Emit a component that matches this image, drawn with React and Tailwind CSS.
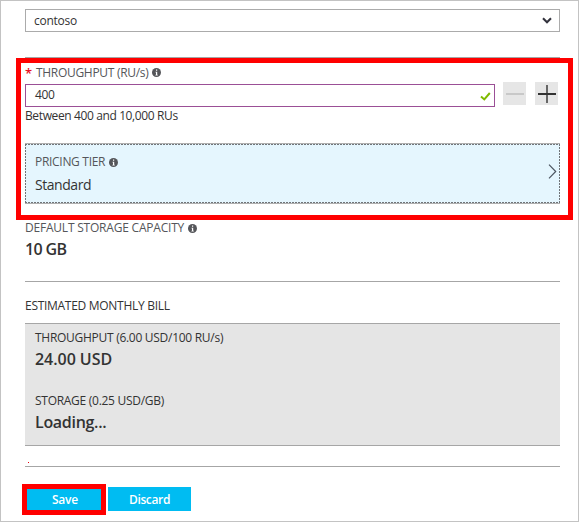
import React from "react";

function Info() {
  return (
    <svg className="ml-[4px] block h-[9px] w-[9px] shrink-0" viewBox="0 0 9 9">
      <circle cx="4.5" cy="4.5" r="4.5" fill="#55565a" />
      <path d="M4 1.5h1.2v1.2H4zM3.5 3.7h1.7v3h.6v.7H3.4v-.7H4V4.4h-.5z" fill="#fff" />
    </svg>
  );
}

function StepButton({ className, children }) {
  return (
    <button className={"flex h-[23px] w-[23px] items-center justify-center bg-[#e6e6e6] " + className}>
      <svg className="block h-[23px] w-[23px]" viewBox="0 0 23 23">{children}</svg>
    </button>
  );
}

export default function App() {
  return (
    <div className="relative h-[522px] w-[579px] overflow-hidden border border-[#c3c3c3] bg-white pt-2 pr-[18px] pl-6 font-['Open_Sans','Noto_Sans',sans-serif] text-[12px] leading-4 text-[#333]">
      <div className="flex h-[23px] items-center justify-between border border-[#ababab] pr-[7px] pl-2">
        <span className="tracking-[-0.25px]">contoso</span>
        <svg className="h-[7px] w-[10px]" viewBox="0 0 10 7">
          <path d="M1 1.3 5 5.2 9 1.3" fill="none" stroke="#33333d" strokeWidth="2.1" />
        </svg>
      </div>

      <div className="mt-[25px] border-t border-[#a6a6a6]">
        <div className="flex h-[25px] items-center pt-1 text-[#55565a]">
          <span className="w-[11px] text-[13px] leading-4 font-semibold text-[#e81123]">*</span>
          <span className="tracking-[-0.3px]">THROUGHPUT (RU/s)</span>
          <Info />
        </div>
        <div className="flex h-[25px]">
          <div className="mt-px flex h-[23px] w-[470px] items-center justify-between border border-[#9b4f96] pr-[3px] pl-[9px]">
            <span className="-mt-px tracking-[-0.4px]">400</span>
            <svg className="mt-px h-[9px] w-[11px]" viewBox="0 0 11 9">
              <path d="M1 4.5 4.3 7.4 9.8 1" fill="none" stroke="#7fba00" strokeWidth="2" />
            </svg>
          </div>
          <StepButton className="-mt-px ml-2">
            <path d="M3 12h18" stroke="#c8c8c8" strokeWidth="2" />
          </StepButton>
          <StepButton className="-mt-px ml-[9px]">
            <path d="M12 3v18" stroke="#666" strokeWidth="2" />
            <path d="M3 12h18" stroke="#333" strokeWidth="2" />
          </StepButton>
        </div>
        <div className="h-[35px] tracking-[-0.38px]">Between 400 and 10,000 RUs</div>
      </div>

      <div className="relative h-[61px] border-y border-[#b0b0b0]">
        <div className="flex h-[59px] items-center justify-between bg-[#e5f6fe] pt-[2px] pr-[3px] pl-[10px]">
          <div className="flex flex-col">
            <div className="flex items-center text-[#55565a]">
              <span className="tracking-[-0.3px]">PRICING TIER</span>
              <Info />
            </div>
            <span className="mt-[5px] text-[14px] leading-5 tracking-[-0.45px]">Standard</span>
          </div>
          <svg className="-mt-[6px] h-[15px] w-[9px]" viewBox="0 0 9 15">
            <path d="m1 .7 6.7 6.8L1 14.3" fill="none" stroke="#4c5560" strokeWidth="1.2" />
          </svg>
        </div>
        <svg className="pointer-events-none absolute inset-0 h-[59px] w-[535px]" viewBox="0 0 535 59">
          <path d="M0 .5H535M0 58.5H535M.5 0V59M534.5 0V59" fill="none" stroke="#707478" strokeDasharray="2 1" />
        </svg>
      </div>

      <div className="mt-4 flex h-4 items-center text-[#55565a]">
        <span className="tracking-[-0.21px]">DEFAULT STORAGE CAPACITY</span>
        <Info />
      </div>
      <div className="mt-[3px] h-[42px] text-[16px] leading-5 font-semibold tracking-[-0.65px]">10 GB</div>

      <div className="h-[42px] border-t border-[#a6a6a6] pt-4 tracking-[-0.29px]">ESTIMATED MONTHLY BILL</div>

      <div className="h-[123px] border-y border-[#a6a6a6] bg-[#e5e5e5] pt-[6px] pl-[10px]">
        <div className="tracking-[-0.28px]">THROUGHPUT (6.00 USD/100 RU/s)</div>
        <div className="mt-[3px] text-[16px] leading-5 font-semibold tracking-[-0.05px]">24.00 USD</div>
        <div className="mt-6 tracking-[-0.28px]">STORAGE (0.25 USD/GB)</div>
        <div className="mt-[3px] text-[16px] leading-5 font-semibold tracking-[-0.3px]">Loading...</div>
      </div>
      <div className="flex h-[21px] items-end border-b border-[#a6a6a6] pb-[3px] pl-[3px]">
        <span className="h-px w-px bg-red-600" />
      </div>

      <div className="-ml-[3px] mt-[17px] flex items-start">
        <button className="h-[31px] w-[84px] border-[5px] border-[#f00] bg-[#00bcf2] pl-[2px] font-semibold leading-[21px] tracking-[-0.2px] text-white">Save</button>
        <button className="mt-[3px] ml-[2px] h-6 w-[83px] bg-[#00bcf2] pt-px font-semibold leading-[23px] tracking-[-0.35px] text-white">Discard</button>
      </div>

      <div className="pointer-events-none absolute top-[57px] left-[15px] h-[162px] w-[557px] border-[5px] border-[#f00]" />
    </div>
  );
}
